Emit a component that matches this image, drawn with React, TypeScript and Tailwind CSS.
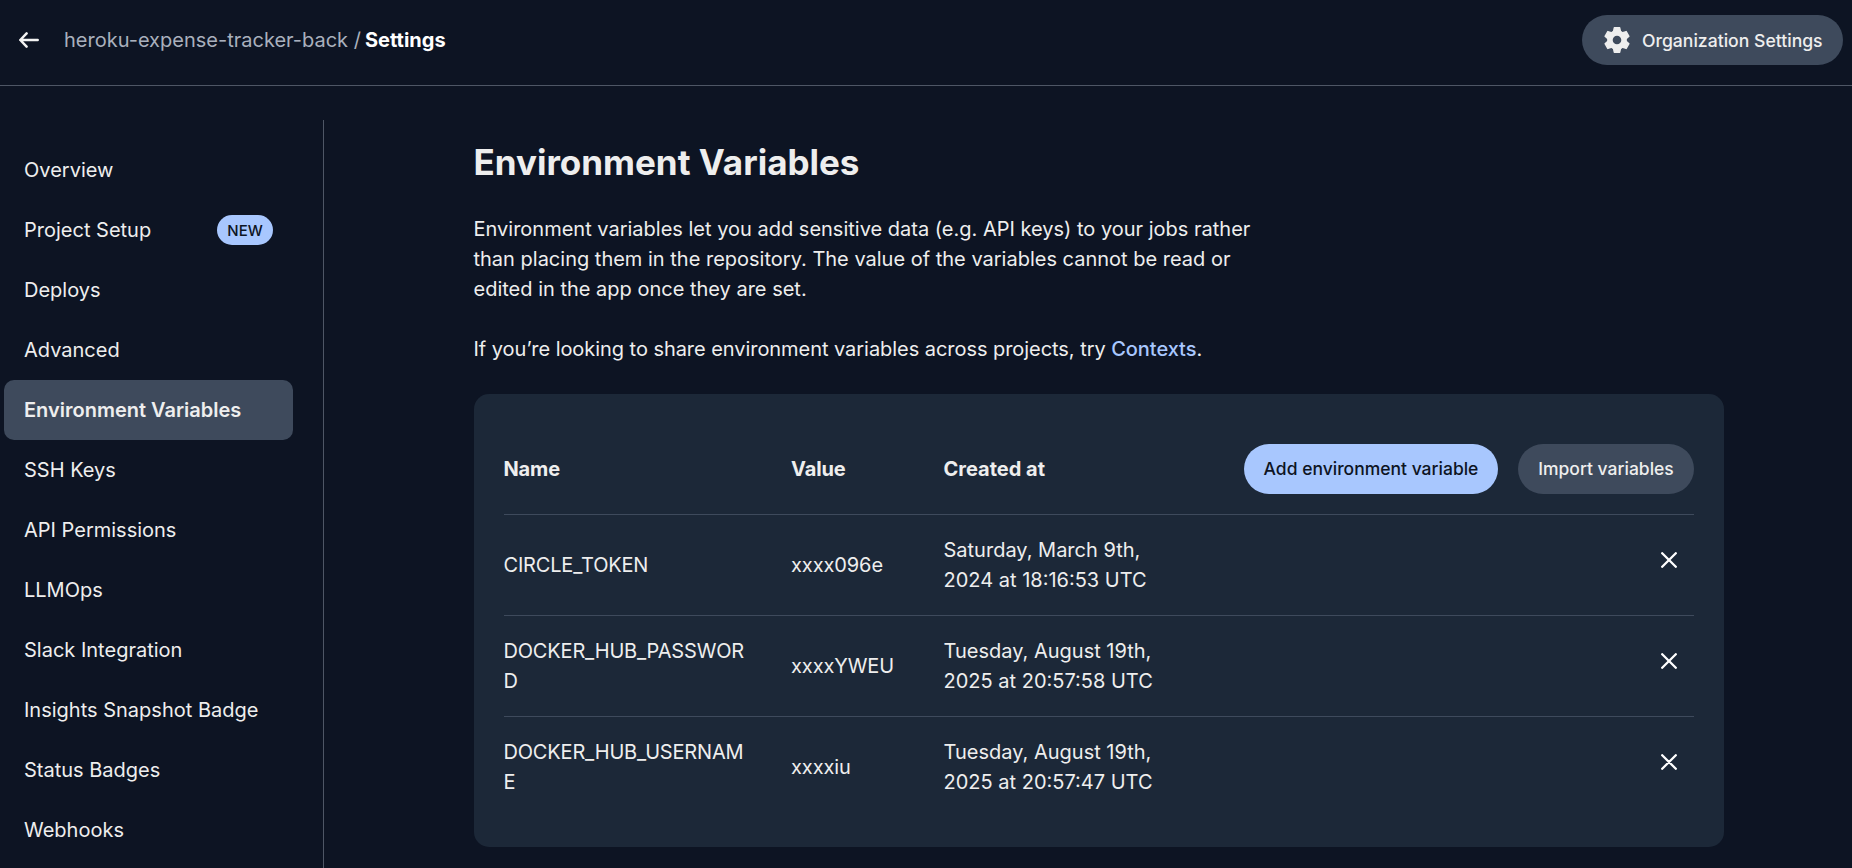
import React from "react";

const navItems = [
  "Overview",
  "Project Setup",
  "Deploys",
  "Advanced",
  "Environment Variables",
  "SSH Keys",
  "API Permissions",
  "LLMOps",
  "Slack Integration",
  "Insights Snapshot Badge",
  "Status Badges",
  "Webhooks",
];

const variables = [
  { name: "CIRCLE_TOKEN", value: "xxxx096e", created: "Saturday, March 9th, 2024 at 18:16:53 UTC" },
  { name: "DOCKER_HUB_PASSWORD", value: "xxxxYWEU", created: "Tuesday, August 19th, 2025 at 20:57:58 UTC" },
  { name: "DOCKER_HUB_USERNAME", value: "xxxxiu", created: "Tuesday, August 19th, 2025 at 20:57:47 UTC" },
];

function BackArrow() {
  return (
    <svg width="20" height="16" viewBox="0 0 20 16" fill="none" stroke="currentColor" strokeWidth="2.5" strokeLinecap="round" strokeLinejoin="round">
      <path d="M18.7 8H1.4M7.6 1.4L1.3 8l6.3 6.6" />
    </svg>
  );
}

function Gear() {
  return (
    <svg width="26" height="26" viewBox="-13 -13 26 26" fill="currentColor" stroke="currentColor" strokeLinejoin="round">
      <circle r="7.1" fill="none" strokeWidth="5.6" />
      {[0, 60, 120, 180, 240, 300].map((angle) => (
        <path key={angle} strokeWidth="1.4" d="M-3.6-7.8L-2.7-12.2H2.7L3.6-7.8z" transform={`rotate(${angle})`} />
      ))}
    </svg>
  );
}

function Cross() {
  return (
    <svg width="16" height="16" viewBox="0 0 16 16" fill="none" stroke="currentColor" strokeWidth="2.3" strokeLinecap="round">
      <path d="M1.2 1.2l13.6 13.6M14.8 1.2L1.2 14.8" />
    </svg>
  );
}

function Header() {
  return (
    <header className="flex h-[86px] shrink-0 items-center justify-between border-b border-[#4e5665] pb-[5px] pl-[19px] pr-[9px]">
      <div className="flex items-center">
        <button className="text-[#f3f3f3]" aria-label="Back">
          <BackArrow />
        </button>
        <div className="ml-[25px] whitespace-pre text-[20px] leading-[30px] text-[#a9b0bd]">
          heroku-expense-tracker-back /<span className="ml-[4px] font-bold text-white">Settings</span>
        </div>
      </div>
      <button className="flex h-[50px] w-[261px] items-center rounded-full bg-[#3e4a5c] pl-[22px] text-[17.6px] font-medium">
        <Gear />
        <span className="ml-[12px] whitespace-nowrap pt-px">Organization Settings</span>
      </button>
    </header>
  );
}

function Sidebar() {
  return (
    <nav className="mt-[34px] w-[324px] shrink-0 border-r border-[#4e5665] pl-1 pr-[30px] pt-5">
      {navItems.map((item) => (
        <a
          key={item}
          className={
            item === "Environment Variables"
              ? "flex h-[60px] items-center justify-between rounded-[10px] bg-[#3e4a5c] px-5 font-semibold"
              : "flex h-[60px] items-center justify-between px-5"
          }
        >
          {item}
          {item === "Project Setup" && (
            <span className="flex h-[30px] w-14 items-center justify-center rounded-full bg-[#a8c7fe] pt-px text-[15px] font-medium text-[#0d1423]">
              NEW
            </span>
          )}
        </a>
      ))}
    </nav>
  );
}

function VariablesCard() {
  return (
    <section className="mt-[30px] h-[453px] w-[1250px] rounded-[15px] bg-[#1c2838] p-[30px]">
      <div className="flex h-[91px] items-center border-b border-[#3e4a5c] font-bold">
        <div className="-ml-[0.5px] w-[287.5px] tracking-[-0.15px]">Name</div>
        <div className="w-[152.5px] tracking-[-0.1px]">Value</div>
        <div>Created at</div>
        <div className="ml-auto flex gap-5 text-[17.5px] font-medium">
          <button className="h-[50px] w-[254px] whitespace-nowrap rounded-full bg-[#a8c7fe] text-[#0d1423]">Add environment variable</button>
          <button className="h-[50px] w-[176px] whitespace-nowrap rounded-full bg-[#3e4a5c]">Import variables</button>
        </div>
      </div>
      {variables.map((v) => (
        <div key={v.name} className="flex h-[101px] items-center border-b border-[#3e4a5c] last:border-transparent">
          <div className="-ml-[0.5px] w-[287.5px] break-all pr-10 tracking-[-0.18px]">{v.name}</div>
          <div className="w-[152.5px] tracking-[-0.1px]">{v.value}</div>
          <div className="w-[225px]">{v.created}</div>
          <button className="mb-[10px] ml-auto mr-[17px] text-white" aria-label="Delete">
            <Cross />
          </button>
        </div>
      ))}
    </section>
  );
}

export default function App() {
  return (
    <div className="flex h-[868px] w-[1852px] flex-col overflow-hidden bg-[#0d1423] font-['Inter',sans-serif] text-[20px] leading-[30px] text-[#eeeeee]">
      <Header />
      <div className="flex min-h-0 flex-1">
        <Sidebar />
        <main className="pl-[150px] pt-[54px]">
          <h1 className="-ml-[0.5px] text-[35px] font-bold leading-[45px]">Environment Variables</h1>
          <div className="-ml-[0.5px] mt-[29px] w-[800px]">
            <p>
              Environment variables let you add sensitive data (e.g. API keys) to your jobs rather
              <br />
              than placing them in the repository. The value of the variables cannot be read or
              <br />
              edited in the app once they are set.
            </p>
            <p className="mt-[30px] tracking-[-0.05px]">
              If you’re looking to share environment variables across projects, try{" "}
              <a className="font-medium text-[#a8c7fe]">Contexts</a>.
            </p>
          </div>
          <VariablesCard />
        </main>
      </div>
    </div>
  );
}
